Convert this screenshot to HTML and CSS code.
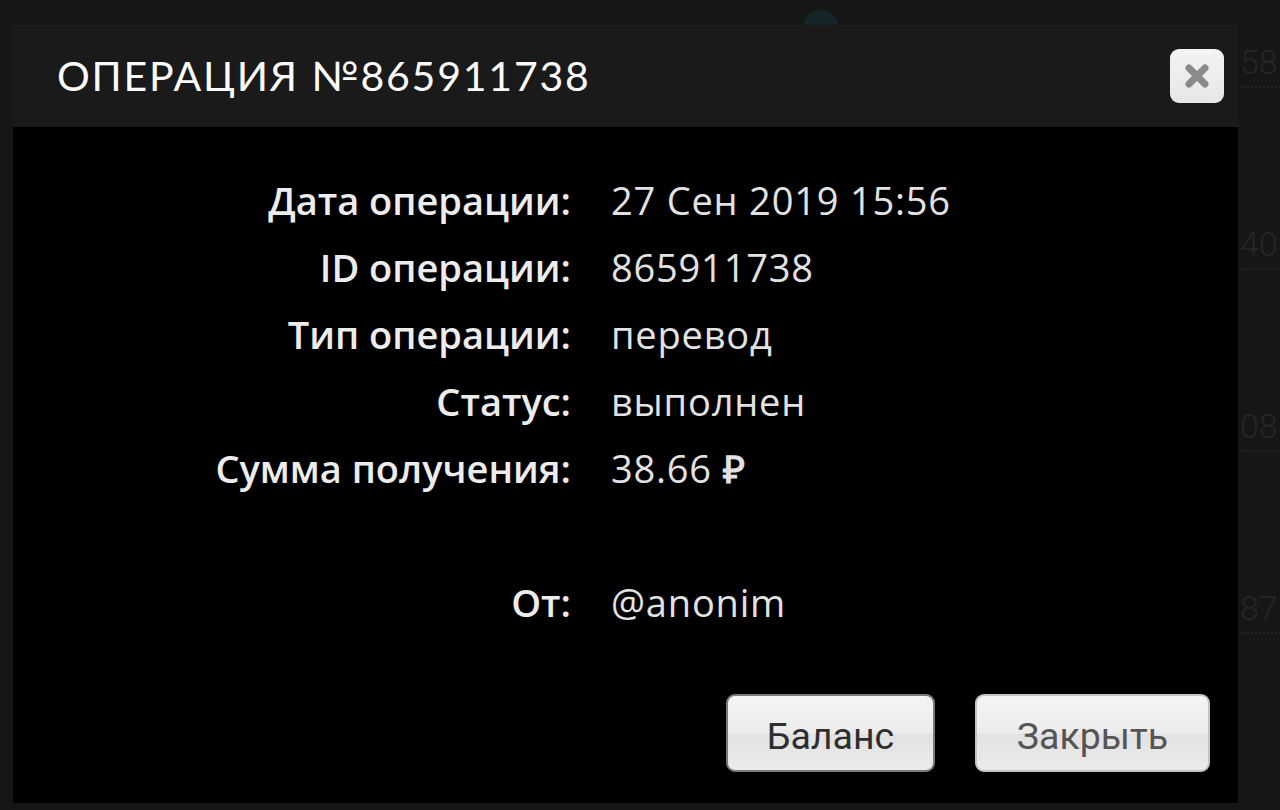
FILE: index.html
```html
<!doctype html>
<html lang="ru">
  <head>
    <meta charset="UTF-8" />
    <meta name="viewport" content="width=device-width, initial-scale=1.0" />
    <title>Операция №865911738</title>
    <link rel="stylesheet" href="styles.css">
  </head>
  <body>
    <div class="page">
      <div class="page-dot"></div>
      <ul class="page-list">
        <li>58</li>
        <li>40</li>
        <li>08</li>
        <li>87</li>
      </ul>
    </div>

    <div class="modal">
      <div class="modal-header">
        <h1>Операция №865911738</h1>
        <button class="close-btn" aria-label="Закрыть">
          <svg viewBox="0 0 26 24" width="26" height="24">
            <path d="M5 4L21 20M21 4L5 20" stroke="#8a8a8a" stroke-width="7" stroke-linecap="round" />
          </svg>
        </button>
      </div>

      <div class="modal-body">
        <dl class="details">
          <dt>Дата операции:</dt>
          <dd>27 Сен 2019 15:56</dd>
          <dt>ID операции:</dt>
          <dd>865911738</dd>
          <dt>Тип операции:</dt>
          <dd>перевод</dd>
          <dt>Статус:</dt>
          <dd>выполнен</dd>
          <dt>Сумма получения:</dt>
          <dd>38.66 <span class="rub">₽</span></dd>
          <dt class="spacer"></dt>
          <dd class="spacer"></dd>
          <dt>От:</dt>
          <dd>@anonim</dd>
        </dl>

        <div class="actions">
          <button class="btn btn-dark">Баланс</button>
          <button class="btn">Закрыть</button>
        </div>
      </div>
    </div>
  </body>
</html>
```

FILE: styles.css
```css
* {
  box-sizing: border-box;
  margin: 0;
  padding: 0;
}

body {
  background: #161616;
  font-family: "Open Sans", Arial, sans-serif;
  color: #e6e6e6;
  height: 810px;
  overflow: hidden;
}

/* page behind the dialog */
.page {
  position: relative;
  height: 810px;
}

.page-dot {
  position: absolute;
  left: 803px;
  top: 10px;
  width: 36px;
  height: 36px;
  border-radius: 50%;
  background: #132526;
}

.page-list {
  list-style: none;
  position: absolute;
  left: 1240px;
  top: 42px;
  display: flex;
  flex-direction: column;
  gap: 136px;
}

.page-list li {
  font-family: "Roboto", sans-serif;
  font-weight: 300;
  font-size: 34px;
  color: #262626;
  border-bottom: 2px dotted #232323;
  padding-bottom: 4px;
  width: 60px;
}

/* dialog */
.modal {
  position: absolute;
  left: 13px;
  top: 25px;
  width: 1225px;
}

.modal-header {
  height: 102px;
  display: flex;
  align-items: center;
  justify-content: space-between;
  padding: 0 14px 0 44px;
  background: #1a1a1a;
}

.modal-header h1 {
  font-family: "Lato", sans-serif;
  font-weight: 400;
  font-size: 41px;
  letter-spacing: 1.8px;
  text-transform: uppercase;
  color: #fafafa;
  margin-top: -2px;
}

.close-btn {
  width: 54px;
  height: 54px;
  border: none;
  border-radius: 9px;
  background: linear-gradient(#f4f4f4, #e6e6e6);
  display: flex;
  align-items: center;
  justify-content: center;
}

.close-btn svg {
  filter: blur(0.6px);
}

.modal-body {
  background: #000;
  height: 676px;
  padding: 40px 28px 0 0;
}

.details {
  display: grid;
  grid-template-columns: 558px 1fr;
  column-gap: 40px;
  line-height: 67px;
  font-size: 38px;
}

.details dt {
  text-align: right;
  font-weight: 600;
  color: #ececec;
}

.details dd {
  color: #e2e2e2;
  letter-spacing: 0.8px;
}

.details .spacer {
  height: 67px;
}

.rub {
  font-weight: 700;
}

.actions {
  display: flex;
  justify-content: flex-end;
  gap: 40px;
  margin-top: 58px;
}

.btn {
  font-family: "Roboto", sans-serif;
  font-size: 37.5px;
  color: #555;
  height: 78px;
  width: 235px;
  padding-top: 6px;
  border: 2px solid #c4c4c4;
  border-radius: 9px;
  background: linear-gradient(#f4f4f4 0%, #ececec 50%, #e2e2e2 52%, #ebebeb 100%);
}

.btn-dark {
  width: 209px;
  color: #2e2e2e;
  border-color: #7a7a7a;
}
```
